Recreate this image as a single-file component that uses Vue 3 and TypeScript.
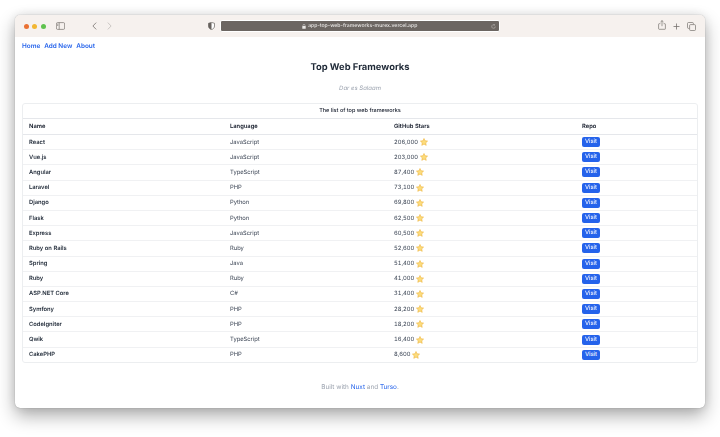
<script setup lang="ts">
interface Row { name: string; lang: string; stars: string }
const rows: Row[] = [
  { name: 'React', lang: 'JavaScript', stars: '206,000' },
  { name: 'Vue.js', lang: 'JavaScript', stars: '203,000' },
  { name: 'Angular', lang: 'TypeScript', stars: '87,400' },
  { name: 'Laravel', lang: 'PHP', stars: '73,100' },
  { name: 'Django', lang: 'Python', stars: '69,800' },
  { name: 'Flask', lang: 'Python', stars: '62,500' },
  { name: 'Express', lang: 'JavaScript', stars: '60,500' },
  { name: 'Ruby on Rails', lang: 'Ruby', stars: '52,600' },
  { name: 'Spring', lang: 'Java', stars: '51,400' },
  { name: 'Ruby', lang: 'Ruby', stars: '41,000' },
  { name: 'ASP.NET Core', lang: 'C#', stars: '31,400' },
  { name: 'Symfony', lang: 'PHP', stars: '28,200' },
  { name: 'CodeIgniter', lang: 'PHP', stars: '18,200' },
  { name: 'Qwik', lang: 'TypeScript', stars: '16,400' },
  { name: 'CakePHP', lang: 'PHP', stars: '8,600' },
]
</script>

<template>
  <div class="stage">
    <div class="window">
      <header class="toolbar">
        <div class="lights">
          <span class="light red"></span>
          <span class="light amber"></span>
          <span class="light green"></span>
        </div>
        <svg class="icon sidebar" width="9" height="8" viewBox="0 0 9 8" fill="none" stroke="#77726e" stroke-width=".7">
          <rect x=".4" y=".6" width="8.2" height="6.8" rx="1.2" />
          <path d="M3.2.6v6.8M1.1 2.2h1.2M1.1 3.4h1.2" />
        </svg>
        <svg class="icon back" width="5" height="8" viewBox="0 0 5 8" fill="none" stroke="#77726e" stroke-width=".8">
          <path d="M4.2.6.9 4l3.3 3.4" />
        </svg>
        <svg class="icon forward" width="5" height="8" viewBox="0 0 5 8" fill="none" stroke="#c0bcb9" stroke-width=".8">
          <path d="M.8.6 4.1 4 .8 7.4" />
        </svg>
        <svg class="icon shield" width="7" height="8" viewBox="0 0 7 8">
          <path d="M3.5.4 6.5 1.3V4c0 1.900-1.300 3-3 3.700C1.800 7 .5 5.900.5 4V1.300Z" fill="#fff" stroke="#66615d" stroke-width=".7" />
          <path d="M3.500.4.500 1.300V4c0 1.900 1.300 3 3 3.700Z" fill="#66615d" />
        </svg>
        <div class="address">
          <span class="url"><svg width="4" height="5" viewBox="0 0 4 5" class="lock"><rect x=".3" y="2" width="3.400" height="2.800" rx=".4" fill="#e8e6e4" /><path d="M1 2.200V1.300a1 1 0 0 1 2 0v.9" fill="none" stroke="#e8e6e4" stroke-width=".5" /></svg>app-top-web-frameworks-murex.vercel.app</span>
          <svg class="reload" width="5" height="5" viewBox="0 0 5 5" fill="none" stroke="#bdb9b6" stroke-width=".6">
            <path d="M4.300 2.500A1.800 1.800 0 1 1 3.500 1M3.600.2v1h-1" />
          </svg>
        </div>
        <svg class="icon share" width="8" height="10" viewBox="0 0 8 10" fill="none" stroke="#77726e" stroke-width=".7">
          <path d="M2.400 3.700H1.200a.6.6 0 0 0-.6.6v4.400c0 .3.300.6.6.6h5.600a.6.6 0 0 0 .6-.6V4.300a.6.6 0 0 0-.6-.6H5.600M4 6.200V.6M2.500 2 4 .6 5.500 2" />
        </svg>
        <svg class="icon plus" width="7" height="7" viewBox="0 0 7 7" fill="none" stroke="#77726e" stroke-width=".8">
          <path d="M3.500.5v6M.5 3.500h6" />
        </svg>
        <svg class="icon tabs" width="9" height="9" viewBox="0 0 9 9" fill="none" stroke="#77726e" stroke-width=".7">
          <path d="M2.300 6.400H1.500a1 1 0 0 1-1-1V1.500a1 1 0 0 1 1-1h3.900a1 1 0 0 1 1 1v.8" />
          <rect x="2.600" y="2.600" width="5.900" height="5.900" rx="1" />
        </svg>
      </header>

      <main class="page">
        <nav class="nav">
          <a>Home</a>
          <a>Add New</a>
          <a>About</a>
        </nav>
        <h1 class="title">Top Web Frameworks</h1>
        <p class="place">Dar es Salaam</p>
        <div class="card">
          <table class="table">
            <caption class="caption">The list of top web frameworks</caption>
            <colgroup>
              <col class="c1" /><col class="c2" /><col class="c3" /><col class="c4" />
            </colgroup>
            <thead>
              <tr>
                <th>Name</th>
                <th>Language</th>
                <th>GitHub Stars</th>
                <th>Repo</th>
              </tr>
            </thead>
            <tbody>
              <tr v-for="row in rows" :key="row.name">
                <td class="name">{{ row.name }}</td>
                <td>{{ row.lang }}</td>
                <td>
                  <span class="stars">{{ row.stars }}
                    <svg class="star" width="8" height="8" viewBox="0 0 24 24">
                      <path d="M12 1.500l3.200 6.900 7.500.9-5.500 5.200 1.400 7.500L12 18.300l-6.600 3.700 1.400-7.500-5.500-5.200 7.500-.9Z" fill="#fcdc7c" stroke="#efb33a" stroke-width="1.800" stroke-linejoin="round" />
                    </svg>
                  </span>
                </td>
                <td><a class="visit">Visit</a></td>
              </tr>
            </tbody>
          </table>
        </div>
        <footer class="footer">Built with <a>Nuxt</a> and <a>Turso</a>.</footer>
      </main>
    </div>
  </div>
</template>

<style>
html, body { margin: 0; background: #fff; overflow: hidden; }
</style>

<style scoped>
.stage {
  width: 720px;
  height: 437px;
  padding: 15px 15px 0;
  box-sizing: border-box;
  font-family: Inter, "Liberation Sans", sans-serif;
  text-rendering: geometricPrecision;
  background: #fff;
}
.window {
  width: 690px;
  height: 393px;
  border-radius: 5px;
  overflow: hidden;
  background: #fff;
  box-shadow: 0 0 1px rgba(0, 0, 0, .45), 0 8px 18px rgba(0, 0, 0, .32), 0 0 12px rgba(0, 0, 0, .1);
  display: flex;
  flex-direction: column;
  filter: blur(.3px);
}
.toolbar {
  height: 22px;
  flex: none;
  background: #f6f1ee;
  display: flex;
  align-items: center;
  padding-left: 9px;
}
.lights { display: flex; gap: 3.400px; }
.light { width: 5px; height: 5px; border-radius: 50%; }
.red { background: #ea7133; }
.amber { background: #f2b632; }
.green { background: #5fc24e; }
.icon { flex: none; }
.sidebar { margin-left: 10px; }
.back { margin-left: 27px; }
.forward { margin-left: 10px; }
.shield { margin-left: 96px; }
.address {
  margin-left: 5px;
  width: 280px;
  height: 12px;
  border-radius: 2px;
  background: #6c6662;
  border: .5px solid #fff;
  box-sizing: border-box;
  display: flex;
  align-items: center;
  justify-content: center;
  position: relative;
}
.url { font-size: 5.150px; font-weight: 500; color: #e8e6e4; display: flex; align-items: center; gap: 2px; }
.lock { flex: none; }
.reload { position: absolute; right: 3px; top: 3px; }
.share { margin-left: 158px; margin-top: -2px; }
.plus { margin-left: 7px; }
.tabs { margin-left: 7px; }
.page {
  flex: 1;
  padding: 0 7px;
  position: relative;
  color: #111827;
}
.nav { display: flex; gap: 4px; padding-top: 4.500px; font-size: 6.400px; font-weight: 600; line-height: 9px; color: #2563eb; }
.title {
  margin: 10.500px 0 0;
  text-align: center;
  font-size: 9.400px;
  line-height: 14px;
  font-weight: 700;
  color: #1f2937;
}
.place {
  margin: 9px 0 0;
  text-align: center;
  font-size: 6px;
  line-height: 9px;
  font-style: italic;
  color: #9ca3af;
}
.card {
  margin-top: 10px;
  border: 1px solid #eceef0;
  border-radius: 3px;
  overflow: hidden;
}
.table {
  width: 100%;
  table-layout: fixed;
  border-collapse: collapse;
  font-size: 5.800px;
  color: #374151;
  font-variant-numeric: tabular-nums;
}
.caption {
  height: 15px;
  line-height: 14px;
  text-align: center;
  font-weight: 500;
  font-size: 5.500px;
  color: #111827;
  border-bottom: 1px solid #e5e7eb;
  box-sizing: border-box;
}
.c1 { width: 201px; }
.c2 { width: 164px; }
.c3 { width: 188px; }
th {
  height: 15px;
  padding: 0 6px;
  text-align: left;
  font-weight: 600;
  color: #111827;
  border-bottom: 1px solid #e5e7eb;
}
td {
  height: 14.200px;
  padding: 0 6px;
  border-bottom: 1px solid #f0f1f3;
}
tbody tr:last-child td { border-bottom: 0; }
.name { font-weight: 600; color: #1f2937; }
.stars { display: inline-flex; align-items: center; gap: 1.500px; }
.star { flex: none; }
.visit {
  display: inline-block;
  width: 18px;
  height: 10px;
  line-height: 10px;
  text-align: center;
  border-radius: 2px;
  background: #2563eb;
  color: #f4f7ff;
  font-weight: 500;
  vertical-align: middle;
}
.footer {
  margin-top: 19px;
  text-align: center;
  font-size: 6.400px;
  line-height: 10px;
  color: #9ca3af;
}
.footer a { color: #2563eb; }
</style>
